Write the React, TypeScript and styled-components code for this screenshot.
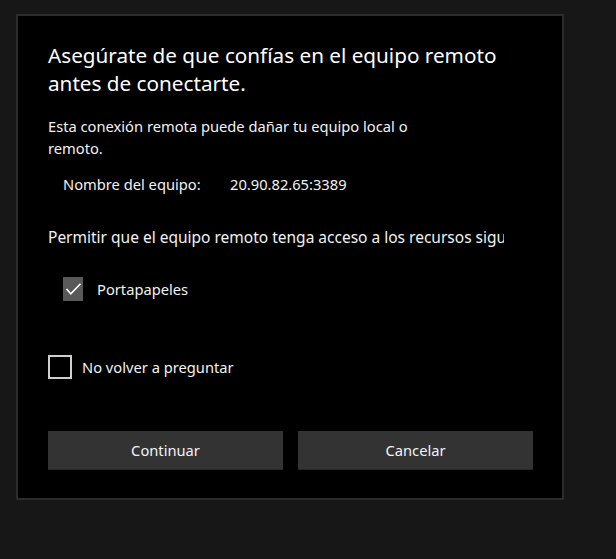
import React from "react";
import styled, { createGlobalStyle } from "styled-components";

const Global = createGlobalStyle`
  html, body { margin: 0; padding: 0; background: #171717; }
  body { font-family: "Noto Sans", "Open Sans", sans-serif; color: #fff; }
`;

const Page = styled.div`
  width: 616px;
  height: 559px;
  background: #171717;
  padding: 14px 0 0 16px;
  box-sizing: border-box;
`;

const Dialog = styled.div`
  width: 548px;
  height: 486px;
  box-sizing: border-box;
  background: #000;
  border: 2px solid #2c2c2c;
  padding: 25px 28px 0 30px;
  display: flex;
  flex-direction: column;
`;

const Title = styled.h1`
  margin: 0;
  font-size: 20.7px;
  font-weight: 400;
  line-height: 28px;
  color: #fff;
  width: 480px;
`;

const Text = styled.p<{ $indent?: number; $top: number; $width?: number }>`
  margin: ${(p) => p.$top}px 0 0 ${(p) => p.$indent ?? 0}px;
  font-size: 14.7px;
  line-height: 22px;
  color: #f2f2f2;
  ${(p) => (p.$width ? `width: ${p.$width}px;` : "")}
`;

const Clipped = styled(Text)`
  white-space: nowrap;
  overflow: hidden;
  width: 456px;
  font-size: 15.5px;
`;

const Label = styled.span`
  display: inline-block;
  width: 167px;
`;

const CheckRow = styled.label<{ $indent?: number; $top: number; $gap: number }>`
  display: flex;
  align-items: center;
  gap: ${(p) => p.$gap}px;
  margin: ${(p) => p.$top}px 0 0 ${(p) => p.$indent ?? 0}px;
  font-size: 14.7px;
  color: #f2f2f2;
  height: 24px;
`;

const Box = styled.span<{ $checked?: boolean }>`
  box-sizing: border-box;
  width: ${(p) => (p.$checked ? 20 : 24)}px;
  height: 24px;
  display: flex;
  align-items: center;
  justify-content: center;
  background: ${(p) => (p.$checked ? "#595959" : "#000")};
  border: ${(p) => (p.$checked ? "none" : "2px solid #cfcfcf")};
`;

const Buttons = styled.div`
  display: grid;
  grid-template-columns: 235px 235px;
  gap: 15px;
  margin-top: 52px;
`;

const Button = styled.button`
  height: 39px;
  background: #333;
  border: none;
  border-bottom: 1px solid #262626;
  color: #f2f2f2;
  font-family: "Noto Sans", "Open Sans", sans-serif;
  font-size: 14.7px;
  padding: 0;
`;

export default function App() {
  return (
    <>
      <Global />
      <Page>
        <Dialog>
          <Title>Asegúrate de que confías en el equipo remoto antes de conectarte.</Title>
          <Text $top={18} $width={400}>
            Esta conexión remota puede dañar tu equipo local o remoto.
          </Text>
          <Text $top={14} $indent={15}>
            <Label>Nombre del equipo:</Label>20.90.82.65:3389
          </Text>
          <Clipped $top={31}>
            Permitir que el equipo remoto tenga acceso a los recursos siguientes:
          </Clipped>
          <CheckRow $top={29} $indent={15} $gap={14}>
            <Box $checked>
              <svg width="17" height="14" viewBox="0 0 17 14">
                <polyline points="1.5,7 5.8,11.8 15.5,1.8" fill="none" stroke="#fff" strokeWidth="1.6" />
              </svg>
            </Box>
            Portapapeles
          </CheckRow>
          <CheckRow $top={54} $gap={10}>
            <Box />
            No volver a preguntar
          </CheckRow>
          <Buttons>
            <Button>Continuar</Button>
            <Button>Cancelar</Button>
          </Buttons>
        </Dialog>
      </Page>
    </>
  );
}
